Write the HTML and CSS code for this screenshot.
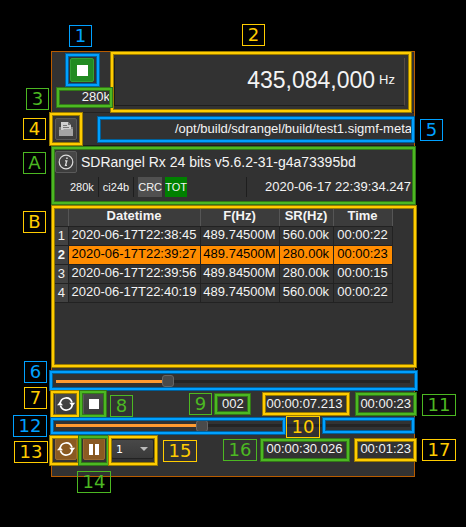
FILE: index.html
```html
<!DOCTYPE html>
<html lang="en">
<head>
<meta charset="utf-8">
<title>SigMF file input</title>
<link rel="stylesheet" href="styles.css">
</head>
<body>
<main class="stage">
  <section class="panel">
    <div class="top">
      <div class="device">
        <button class="btn go" aria-label="Start or stop"><svg viewBox="0 0 22 22"><rect x="6" y="6" width="11" height="11" fill="#fff"/></svg></button>
        <span class="rate">280k</span>
      </div>
      <div class="freq"><span class="digits">435,084,000</span><span class="unit">Hz</span></div>
    </div>

    <div class="file">
      <button class="btn" aria-label="Open file"><svg viewBox="0 0 20 20"><path d="M3 8h14v9H3z" fill="#858585"/><path d="M5 3h7l3 3v7H5z" fill="#cfcfcf"/><path d="M12 3v3h3z" fill="#777"/><path d="M7 6.500h4M7 8.500h6" stroke="#777" fill="none"/><path d="M3 11h4l1-1h9v7H3z" fill="#a4a4a4"/></svg></button>
      <span class="path">/opt/build/sdrangel/build/test1.sigmf-meta</span>
    </div>

    <div class="info">
      <div class="line">
        <button class="btn" aria-label="Information"><svg viewBox="0 0 20 20" fill="none" stroke="#dcdcdc"><circle cx="10" cy="10" r="6.800" stroke-width="1.200"/><path d="M9 8.800h1.800l-1.300 4.600h1.500" stroke-width="1.300"/><path d="M10.200 6.300h1.500" stroke-width="1.600"/></svg></button>
        <span class="desc">SDRangel Rx 24 bits v5.6.2-31-g4a73395bd</span>
      </div>
      <div class="line meta">
        <span class="cell">280k</span>
        <span class="cell">ci24b</span>
        <span class="chip">CRC</span>
        <span class="chip ok">TOT</span>
        <span class="gap"></span>
        <span class="stamp">2020-06-17 22:39:34.247</span>
      </div>
    </div>

    <div class="captures">
      <table>
        <thead><tr><th class="num"></th><th class="date">Datetime</th><th class="hz">F(Hz)</th><th class="sr">SR(Hz)</th><th class="time">Time</th></tr></thead>
        <tbody>
          <tr><th>1</th><td>2020-06-17T22:38:45</td><td>489.74500M</td><td>560.00k</td><td>00:00:22</td></tr>
          <tr class="current"><th>2</th><td>2020-06-17T22:39:27</td><td>489.74500M</td><td>280.00k</td><td>00:00:23</td></tr>
          <tr><th>3</th><td>2020-06-17T22:39:56</td><td>489.84500M</td><td>280.00k</td><td>00:00:15</td></tr>
          <tr><th>4</th><td>2020-06-17T22:40:19</td><td>489.74500M</td><td>560.00k</td><td>00:00:22</td></tr>
        </tbody>
      </table>
    </div>

    <input class="slider" type="range" min="0" max="100" value="31" style="--pos:31%" aria-label="Position in capture">

    <div class="controls">
      <button class="btn" aria-label="Loop capture"><svg viewBox="0 0 20 20"><use href="#loop"/></svg></button>
      <button class="btn" aria-label="Play capture"><svg viewBox="0 0 20 20"><rect x="5" y="5" width="10" height="10" fill="#fff"/></svg></button>
      <span class="index">002</span>
      <span class="elapsed">00:00:07.213</span>
      <span class="total">00:00:23</span>
    </div>

    <input class="slider low" type="range" min="0" max="100" value="41" style="--pos:41%" aria-label="Position in record">

    <div class="controls full">
      <button class="btn on" aria-label="Loop record"><svg viewBox="0 0 20 20"><use href="#loop"/></svg></button>
      <button class="btn on" aria-label="Pause record"><svg viewBox="0 0 20 20"><path d="M5 5h4v11H5zM11 5h4v11h-4z" fill="#fff"/></svg></button>
      <span class="speed"><select aria-label="Speed factor"><option>1</option><option>2</option><option>5</option></select></span>
      <span class="elapsed">00:00:30.026</span>
      <span class="total">00:01:23</span>
    </div>
  </section>

  <div class="frame blue f1"></div><div class="tag blue t1">1</div>
  <div class="frame yellow f2"></div><div class="tag yellow t2">2</div>
  <div class="frame green f3"></div><div class="tag green t3">3</div>
  <div class="frame yellow f4"></div><div class="tag yellow t4">4</div>
  <div class="frame blue f5"></div><div class="tag blue t5">5</div>
  <div class="frame green fa"></div><div class="tag green ta">A</div>
  <div class="frame yellow fb"></div><div class="tag yellow tb">B</div>
  <div class="frame blue f6"></div><div class="tag blue t6">6</div>
  <div class="frame yellow f7"></div><div class="tag yellow t7">7</div>
  <div class="frame green f8"></div><div class="tag green t8">8</div>
  <div class="frame green f9"></div><div class="tag green t9">9</div>
  <div class="frame yellow f10"></div><div class="tag yellow wide t10">10</div>
  <div class="frame green f11"></div><div class="tag green wide t11">11</div>
  <div class="frame blue f12"></div><div class="frame blue f12b"></div><div class="tag blue wide t12">12</div>
  <div class="frame yellow f13"></div><div class="tag yellow wide t13">13</div>
  <div class="frame green f14"></div><div class="tag green wide t14">14</div>
  <div class="frame yellow f15"></div><div class="tag yellow wide t15">15</div>
  <div class="frame green f16"></div><div class="tag green wide t16">16</div>
  <div class="frame yellow f17"></div><div class="tag yellow wide t17">17</div>
</main>
<svg class="defs" aria-hidden="true"><symbol id="loop" viewBox="0 0 20 20"><path d="M4 10A6.200 6.800 0 0 1 16 8.500M16.400 10A6.200 6.800 0 0 1 4.400 11.500" fill="none" stroke="#fff" stroke-width="1.700"/><path d="M13.200 8.800h6L16.200 12.300zM7 11.200H1L4 7.700z" fill="#fff"/></symbol></svg>
</body>
</html>
```
FILE: styles.css
```css
* { box-sizing: border-box; }
body {
  margin: 0;
  background: #000;
  color: #f4f4f4;
  font: 13px/18px "Liberation Sans", Arial, sans-serif;
}
.defs { position: absolute; width: 0; height: 0; }
.stage { position: relative; min-height: 527px; padding: 51px 51px 50px; }
.panel {
  background: #323232;
  border: 1px solid #b85c00;
}
.btn {
  width: 22px;
  height: 22px;
  padding: 0;
  border: 1px solid #5a5a5a;
  border-radius: 2px;
  background: linear-gradient(#484848, #3c3c3c);
  flex: none;
}
.btn svg { display: block; width: 20px; height: 20px; }
.btn.go { width: 24px; height: 24px; background: #228b22; border-color: #35a035; }
.btn.go svg { width: 22px; height: 22px; }
.btn.on { background: #8a5a22; border-color: #9a6a30; }

.top { display: flex; height: 60px; }
.device { width: 58px; display: flex; flex-direction: column; align-items: flex-end; padding-top: 6px; }
.device .btn { margin-right: 16px; }
.rate { margin-top: 6px; }
.freq {
  flex: 1;
  display: flex;
  align-items: center;
  justify-content: flex-end;
  gap: 4px;
  margin: 6px 9px 6px 4px;
  padding: 0 9px 4px 0;
  border-left: 1px solid #1a1a1a;
  border-right: 1px solid #554a42;
  border-bottom: 1px solid #1e1e1e;
}
.digits { font-size: 23px; line-height: 24px; }

.file {
  display: flex;
  align-items: center;
  justify-content: space-between;
  height: 34px;
  padding: 0 2px 0 3px;
  border-top: 1px solid #222;
  border-bottom: 1px solid #1c1c1c;
}

.info { height: 59px; padding: 5px 3px; }
.line { display: flex; align-items: center; gap: 4px; }
.desc { font-size: 14px; }
.meta { height: 20px; margin-top: 4px; padding-left: 15px; gap: 0; font-size: 11px; }
.cell { height: 20px; line-height: 20px; padding-right: 4px; border-right: 1px solid #1e1e1e; margin-right: 4px; }
.chip { width: 24px; line-height: 20px; margin-right: 3px; background: #505050; text-align: center; }
.ok { width: 22px; background: #008000; }
.gap { width: 57px; height: 20px; border-right: 1px solid #1e1e1e; }
.stamp { margin-left: auto; font-size: 13px; }

.captures { height: 164px; padding: 2px 3px; }
table { border-collapse: collapse; table-layout: fixed; width: 337px; }
th, td { height: 19px; padding: 0; line-height: 18px; text-align: center; border: solid #222; border-width: 0 1px 1px 0; white-space: nowrap; }
td { padding-bottom: 2px; line-height: 16px; }
thead th { background: #3c3c3c; border-right-color: #555; }
tbody th { background: #424242; font-weight: 400; }
.num { width: 13px; }
.date { width: 132px; }
.hz { width: 79px; }
.sr { width: 54px; }
.time { width: 59px; }
tbody .current th { font-weight: 700; }
.current td { background: #ff8c00; color: #000; }

.slider {
  appearance: none;
  display: block;
  width: calc(100% - 8px);
  height: 24px;
  margin: 0 4px;
  background: linear-gradient(90deg, #ff9a30 var(--pos), #242424 var(--pos)) center / 100% 3px no-repeat;
}
.slider::-webkit-slider-thumb {
  appearance: none;
  width: 12px;
  height: 12px;
  border: 1px solid #666;
  border-radius: 3px;
  background: #4a4a4a;
}
.slider.low { height: 21px; }

.controls { display: flex; align-items: center; height: 22px; padding: 0 3px; gap: 6px; }
.controls.full { height: 40px; padding-bottom: 14px; }
.index { margin-left: 111px; }
.elapsed { margin-left: auto; margin-right: 12px; }
.speed { position: relative; }
.speed::after {
  content: "";
  position: absolute;
  right: 6px;
  top: 8px;
  border: 4px solid transparent;
  border-top-color: #bbb;
  border-bottom: 0;
  pointer-events: none;
}
select {
  appearance: none;
  display: block;
  width: 43px;
  height: 20px;
  padding: 0 4px;
  border: 1px solid #222;
  border-radius: 2px;
  background: linear-gradient(#484848, #3a3a3a);
  color: #fff;
  font: 11px "DejaVu Sans", sans-serif;
}

.blue { --ink: #00a0ff; --edge: #00609a; }
.yellow { --ink: #ffcc00; --edge: #9a7c00; }
.green { --ink: #4cb822; --edge: #327818; }
.frame {
  position: absolute;
  border: 2px solid var(--ink);
  box-shadow: 0 0 0 1px var(--edge), inset 0 0 0 1px var(--edge);
  pointer-events: none;
}
.tag {
  position: absolute;
  width: 23px;
  height: 22px;
  border: 1px solid var(--ink);
  color: var(--ink);
  font: 18px/20px "DejaVu Sans", sans-serif;
  text-align: center;
}
.wide { width: 34px; }

.f1 { left: 66px; top: 54px; width: 33px; height: 32px; }
.f2 { left: 111px; top: 52px; right: 55px; height: 60px; }
.f3 { left: 57px; top: 88px; width: 55px; height: 19px; }
.f4 { left: 50px; top: 113px; width: 32px; height: 32px; }
.f5 { left: 98px; top: 117px; right: 52px; height: 25px; }
.fa { left: 52px; top: 147px; right: 51px; height: 57px; }
.fb { left: 52px; top: 206px; right: 50px; height: 161px; }
.f6 { left: 50px; top: 371px; right: 49px; height: 19px; }
.f7 { left: 51px; top: 391px; width: 28px; height: 26px; }
.f8 { left: 80px; top: 391px; width: 26px; height: 26px; }
.f9 { left: 215px; top: 394px; width: 35px; height: 20px; }
.f10 { right: 117px; top: 393px; width: 86px; height: 22px; }
.f11 { right: 50px; top: 393px; width: 60px; height: 22px; }
.f12 { left: 51px; top: 418px; right: 181px; height: 16px; }
.f12b { right: 52px; top: 418px; width: 91px; height: 15px; }
.f13 { left: 50px; top: 436px; width: 30px; height: 29px; }
.f14 { left: 79px; top: 436px; width: 30px; height: 29px; }
.f15 { left: 109px; top: 436px; width: 48px; height: 29px; }
.f16 { right: 117px; top: 439px; width: 88px; height: 22px; }
.f17 { right: 50px; top: 439px; width: 61px; height: 22px; }

.t1 { left: 69px; top: 25px; }
.t2 { left: 242px; top: 24px; }
.t3 { left: 26px; top: 88px; }
.t4 { left: 23px; top: 118px; }
.t5 { right: 23px; top: 119px; }
.ta { left: 23px; top: 152px; }
.tb { left: 23px; top: 211px; }
.t6 { left: 24px; top: 361px; }
.t7 { left: 24px; top: 387px; }
.t8 { left: 110px; top: 395px; }
.t9 { left: 189px; top: 393px; }
.t10 { right: 146px; top: 416px; }
.t11 { right: 10px; top: 394px; }
.t12 { left: 13px; top: 415px; }
.t13 { left: 14px; top: 441px; }
.t14 { left: 77px; top: 471px; }
.t15 { left: 163px; top: 440px; }
.t16 { right: 209px; top: 439px; }
.t17 { right: 10px; top: 439px; }
```
